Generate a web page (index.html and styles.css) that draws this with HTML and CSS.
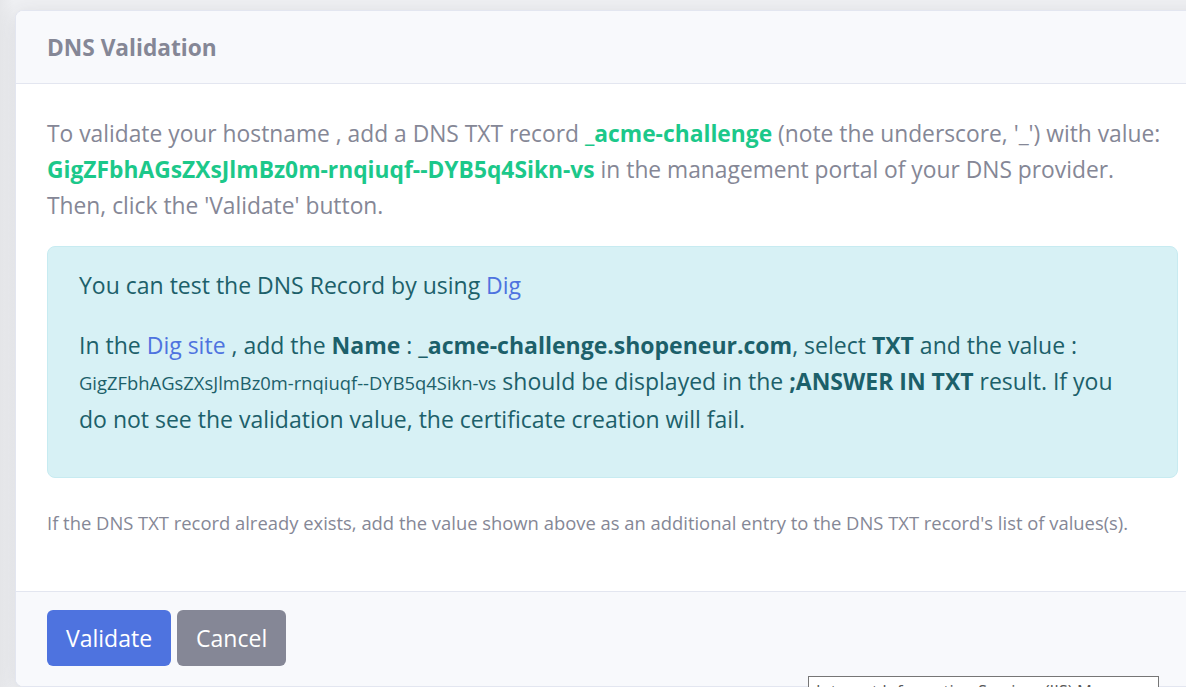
FILE: index.html
```html
<!DOCTYPE html>
<html lang="en">
<head>
<meta charset="utf-8">
<title>DNS Validation</title>
<link rel="stylesheet" href="styles.css">
</head>
<body>
<div class="card">
  <div class="card-header">
    <h6 class="card-title">DNS Validation</h6>
  </div>
  <div class="card-body">
    <p class="lead-text">To validate your hostname , add a DNS TXT record <strong class="ok">_acme-challenge</strong> (note the underscore, '_') with value: <strong class="ok">GigZFbhAGsZXsJlmBz0m-rnqiuqf--DYB5q4Sikn-vs</strong> in the management portal of your DNS provider. Then, click the 'Validate' button.</p>
    <div class="alert">
      <p>You can test the DNS Record by using <a href="#">Dig</a></p>
      <p>In the <a href="#">Dig site</a> , add the <b>Name</b> : <b>_acme-challenge.shopeneur.com</b>, select <b>TXT</b> and the value : <small>GigZFbhAGsZXsJlmBz0m-rnqiuqf--DYB5q4Sikn-vs</small> should be displayed in the <b>;ANSWER IN TXT</b> result. If you do not see the validation value, the certificate creation will fail.</p>
    </div>
    <p class="note"><small>If the DNS TXT record already exists, add the value shown above as an additional entry to the DNS TXT record's list of values(s).</small></p>
  </div>
  <div class="card-footer">
    <button class="btn btn-primary">Validate</button>
    <button class="btn btn-secondary">Cancel</button>
  </div>
</div>
<div class="tooltip">Internet Information Services (IIS) Manager</div>
</body>
</html>
```
FILE: styles.css
```css
html, body {
  margin: 0;
  padding: 0;
  height: 687px;
  overflow: hidden;
}
body {
  background: linear-gradient(90deg, #e6e7ea 0, #eff0f3 14px, #eff0f3 100%);
  font-family: "Open Sans", "Noto Sans", sans-serif;
  color: #858796;
  position: relative;
}
.card {
  margin: 10px 0 0 15px;
  width: 1193px;
  background: #fff;
  border: 1px solid #e3e6f0;
  border-radius: 8px;
  box-shadow: 0 4px 20px rgba(58, 59, 69, 0.12);
  overflow: hidden;
}
.card-header {
  background: #f8f9fc;
  border-bottom: 1px solid #e3e6f0;
  height: 72px;
  display: flex;
  align-items: center;
  padding: 0 31px;
}
.card-title {
  margin: 0;
  font-size: 22.7px;
  font-weight: 700;
  color: #858796;
}
.card-body {
  padding: 32px 31px 50px;
}
.lead-text {
  margin: 0 0 22px;
  font-size: 22.8px;
  line-height: 36px;
}
.ok {
  color: #1cc88a;
  font-weight: 700;
}
.alert {
  background: #d7f1f5;
  border: 1px solid #c7ebf1;
  border-radius: 8px;
  color: #1c606a;
  padding: 20px 31px 18px;
  margin-bottom: 25px;
}
.alert p {
  margin: 0 0 24px;
  font-size: 23px;
  line-height: 36px;
}
.alert p:last-child {
  margin-bottom: 22px;
}
.alert a {
  color: #4e73df;
  text-decoration: none;
}
.alert b {
  font-weight: 700;
}
.alert small {
  font-size: 80%;
}
.note {
  margin: 0;
  font-size: 23px;
  line-height: 36px;
}
.note small {
  font-size: 80%;
}
.card-footer {
  background: #f8f9fc;
  border-top: 1px solid #e3e6f0;
  padding: 18px 31px 20px;
  display: flex;
  gap: 6px;
}
.btn {
  font-family: inherit;
  font-size: 23px;
  color: #fff;
  border: 0;
  border-radius: 6px;
  height: 56px;
  padding: 0 19px;
}
.btn-primary {
  background: #4e73df;
}
.btn-secondary {
  background: #858796;
}
.tooltip {
  position: absolute;
  left: 808px;
  top: 676px;
  width: 351px;
  height: 30px;
  background: #fff;
  border: 1px solid #767676;
  font-family: "Open Sans", sans-serif;
  font-size: 16.5px;
  line-height: 22px;
  color: #575757;
  padding: 3px 7px;
  box-sizing: border-box;
  white-space: nowrap;
  overflow: hidden;
}
```
